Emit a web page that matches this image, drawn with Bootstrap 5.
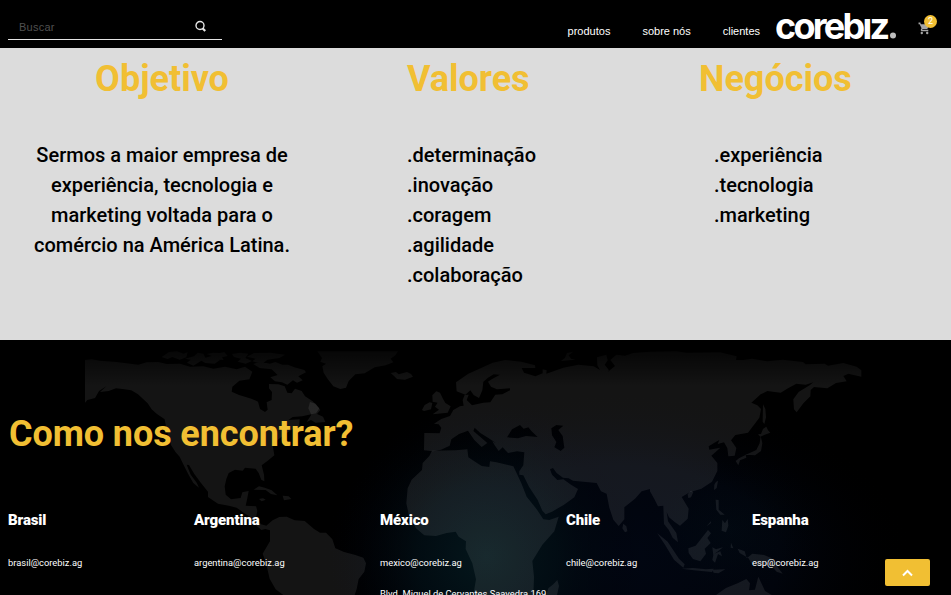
<!DOCTYPE html>
<html lang="pt-BR">
<head>
<meta charset="utf-8">
<meta name="viewport" content="width=device-width, initial-scale=1">
<title>Corebiz</title>
<link href="https://cdn.jsdelivr.net/npm/bootstrap@5.3.0/dist/css/bootstrap.min.css" rel="stylesheet">
<style>
html, body { height: 100%; overflow: hidden; }
body { font-family: Roboto, "Liberation Sans", sans-serif; background: #000; color: #000; }
.topbar { height: 48px; background: #000; padding-left: 8px; }
.search-box { width: 214px; height: 26px; margin-top: 14px; border-bottom: 1px solid #e4e4e4; }
.search-box input { font: 11px/14px "Liberation Sans", Arial, sans-serif; letter-spacing: .25px; width: 175px; padding: 0 0 0 11px; color: #fff; outline: 0; }
.search-box input::placeholder { color: #505050; opacity: 1; }
.search-box svg { margin-left: 11px; margin-top: -1px; }
.menu { font: 11px/14px "Liberation Sans", Arial, sans-serif; gap: 32px; margin-top: 24px; }
.menu a { color: #fff; text-decoration: none; }
.brand-logo { margin: 0 0 0 16px; }
.brand-logo text { font-family: Inter, sans-serif; font-weight: 700; fill: #fff; }
.cart { width: 20px; height: 22px; margin: 14px 13px 0 21px; }
.cart-count { width: 13px; height: 13px; left: 6px; top: 1px; background: #f1bf33; color: #fff; font: 9px/13px Roboto, sans-serif; }
.values { height: 292px; background: #dcdcdc; grid-template-columns: 324px 375px 1fr; padding-top: 9px; }
.section-title { font-size: 36px; line-height: 44px; font-weight: 700; color: #f1bf33; margin: 0; }
.values .copy { font-size: 20px; line-height: 30px; font-weight: 500; margin-top: 39px; }
.values .mid { padding-left: 83px; }
.values .end .copy { padding-left: 15px; }
.offices { height: 255px; padding: 72px 0 0 8px; color: #fff; background: #000; }
.offices .section-title { letter-spacing: -.1px; padding-left: 1px; }
.office-grid { display: grid; grid-template-columns: repeat(5, 186px); margin-top: 54px; }
.office-grid h3 { font-size: 15px; line-height: 20px; font-weight: 900; letter-spacing: -.12px; margin: 0 0 25px; }
.office-grid p { font-size: 9.35px; line-height: 16px; margin: 0 0 15px; white-space: nowrap; }
.to-top { right: 21px; top: 219px; width: 45px; height: 27px; background: #f1bf33; border-radius: 2px; }
</style>
</head>
<body>
<header class="topbar d-flex align-items-start">
  <form class="search-box d-flex align-items-center">
    <input class="border-0 bg-transparent" type="text" placeholder="Buscar" aria-label="Buscar">
    <svg width="13" height="13" viewBox="0 0 13 13" fill="none" stroke="#e6e6e6"><circle cx="6" cy="5.5" r="4" stroke-width="1.4"/><path d="M8.500 8.300l2.700 2.700" stroke-width="2.200"/></svg>
  </form>
  <nav class="menu d-flex ms-auto"><a href="#">produtos</a><a href="#">sobre nós</a><a href="#">clientes</a></nav>
  <svg class="brand-logo" width="121" height="48" viewBox="0 0 121 48"><text x="-1" y="38.500" font-size="36" textLength="115" lengthAdjust="spacing">corebız</text><circle cx="117" cy="35.500" r="3" fill="#bdbdbd"/></svg>
  <div class="cart position-relative">
    <svg width="13" height="13" viewBox="0 0 24 24" fill="#a5a5a5" class="d-block mt-2"><path d="M7 18a2.200 2.200 0 1 0 0 4.400 2.200 2.200 0 0 0 0-4.400zM1 1v3h2l3.600 7.600-1.400 2.400C4.500 15.400 5.500 17 7 17h12v-2.500H7.400l1.100-1.500h7.400c.8 0 1.400-.4 1.800-1L21 4H5.200l-.9-3zm16 17a2.200 2.200 0 1 0 0 4.400 2.200 2.200 0 0 0 0-4.400z"/></svg>
    <span class="cart-count position-absolute rounded-circle text-center">2</span>
  </div>
</header>

<section class="values d-grid">
  <div class="text-center"><h2 class="section-title">Objetivo</h2>
    <div class="copy">Sermos a maior empresa de<br>experiência, tecnologia e<br>marketing voltada para o<br>comércio na América Latina.</div></div>
  <div class="mid"><h2 class="section-title">Valores</h2>
    <div class="copy">.determinação<br>.inovação<br>.coragem<br>.agilidade<br>.colaboração</div></div>
  <div class="end"><h2 class="section-title">Negócios</h2>
    <div class="copy">.experiência<br>.tecnologia<br>.marketing</div></div>
</section>

<section class="offices position-relative overflow-hidden">
  <svg class="position-absolute top-0 start-0" width="951" height="255" viewBox="0 0 2853 765">
    <defs>
      <radialGradient id="teal"><stop offset="0" stop-color="#04171c"/><stop offset=".45" stop-color="#020e14" stop-opacity=".8"/><stop offset="1" stop-color="#000008" stop-opacity="0"/></radialGradient>
      <radialGradient id="navy"><stop offset="0" stop-color="#010612"/><stop offset=".55" stop-color="#01040c"/><stop offset="1" stop-color="#000" stop-opacity="0"/></radialGradient>
      <linearGradient id="land" gradientUnits="userSpaceOnUse" x1="0" y1="30" x2="0" y2="140"><stop offset="0" stop-color="#fff" stop-opacity=".025"/><stop offset="1" stop-color="#fff" stop-opacity=".08"/></linearGradient>
    </defs>
    <ellipse cx="1850" cy="650" rx="900" ry="500" fill="url(#navy)"/>
    <circle cx="1460" cy="650" r="470" fill="url(#teal)"/>
    <ellipse cx="2190" cy="570" rx="300" ry="240" fill="url(#teal)" opacity=".2"/>
    <g fill="url(#land)">
      <!-- North, Central and South America -->
      <path d="M255 60L275 58 300 62 350 66 415 74 440 67 475 66 500 72 540 71 570 80 610 79 640 86 675 80 710 88 735 80 757 95 748 118 718 122 697 140 695 155 717 165 754 176 774 185 780 207 795 216 803 209 800 187 815 180 816 156 807 145 807 132 835 133 854 139 862 158 875 160 885 146 905 153 915 169 938 184 958 205 948 220 906 229 878 231 865 240 899 238 897 262 878 267 851 285 830 302 818 316 823 346 803 362 785 376 792 404 793 424 784 419 776 399 767 386 735 383 728 392 705 389 686 399 679 417 674 439 677 464 693 478 722 474 727 457 746 453 742 474 737 497 768 499 772 512 768 533 783 553 799 557 818 541 838 531 860 530 884 541 914 543 942 567 960 578 978 578 997 598 1006 625 1032 636 1066 645 1090 653 1098 670 1093 695 1076 717 1070 747 1064 765 850 765 827 748 809 716 798 668 788 641 810 604 810 571 796 567 784 570 768 556 758 535 733 520 710 503 687 497 654 491 624 471 624 455 603 429 583 402 567 375 560 374 572 404 590 428 597 443 580 429 565 403 551 375 539 350 527 337 513 315 500 270 494 238 470 221 455 208 443 190 414 163 394 151 368 147 348 145 326 153 300 156 320 138 297 153 285 174 262 180 255 188Z"/>
      <!-- Arctic islands and Greenland -->
      <path d="M485 51l22-15 24-2 20 7 12-5-4 16-20 7-22-8-14 6-18-6zM555 56l27-7 11-11 17 3 6 12 27-7 16 15-15 10-28-2-12-7-24 15-19-9 11-9zM620 42l20-4 19 1 14-3 10 12-17 4 5 8-24-3-21-2 10-7zM696 42l24-4 25 3-9 13 20 9-19 8-24-6 10-9-21-5zM741 50l21-11 50-1 43 6-17 10-36 5-15 13-30-8 10-8zM760 72l22-8 27 7 17-5 21 8 17 0 19 8 30 8 5 7-23 12 13 12-17 7-12-7-17 13-16-7-21-3-14-12 22-7-18-17-36-4z"/>
      <path d="M952 34l242 0-8 12-14 10 8 11-23 9-33 6-30 18-28 3-20 20-8 20-17 4-21-8-17-22-12-19-4-19 11-8-17-6 5-11z"/>
      <path d="M1172 99l16-3 8 7 25-7 12 6 6 8-24 9-24-2-8-8zM930 186l17 5 14 19-10 12 18 8 7 16-29 2-14-8-13 6 14-22-9-19zM761 449l16-10 17 4 21 8 17 15-19-4-16-12zM777 477l12-2 8 4-12 5zM848 467l18 2 8 8-22 4z"/>
      <!-- Eurasia -->
      <path fill-rule="evenodd" d="M1272 331L1273 279 1319 280 1324 263 1316 253 1302 251 1324 237 1350 228 1360 210 1380 199 1391 197 1388 180 1394 165 1406 164 1400 180 1416 196 1450 188 1471 187 1486 164 1507 163 1530 151 1530 145 1491 148 1473 140 1464 125 1475 118 1500 104 1481 103 1464 113 1450 125 1447 151 1437 174 1421 165 1411 151 1396 164 1370 154 1368 127 1405 101 1450 81 1478 68 1515 60 1564 65 1605 76 1606 84 1565 84 1572 98 1606 109 1628 100 1628 88 1640 91 1639 101 1690 83 1735 74 1781 79 1800 90 1792 76 1791 52 1819 44 1823 61 1814 74 1827 91 1822 97 1845 78 1831 60 1849 44 1875 47 1899 39 1950 35 2030 34 2060 38 2160 37 2210 49 2208 60 2230 60 2256 56 2302 64 2348 59 2409 66 2417 73 2474 71 2484 77 2530 69 2570 80 2584 91 2584 110 2545 101 2530 108 2540 124 2508 129 2482 145 2442 141 2432 150 2431 169 2410 190 2390 217 2382 208 2380 178 2396 156 2430 135 2440 127 2417 134 2389 131 2364 145 2342 158 2302 153 2282 163 2254 188 2272 196 2283 207 2278 233 2244 278 2206 285 2193 301 2209 324 2204 347 2185 349 2182 324 2172 307 2153 312 2158 300 2147 306 2126 319 2128 329 2161 323 2134 347 2152 369 2152 393 2136 425 2104 446 2069 457 2045 471 2066 506 2063 536 2040 557 2024 546 2007 532 2000 516 2004 544 2029 579 2034 607 2018 593 2006 569 1992 552 1990 497 1974 499 1963 477 1950 454 1950 447 1925 454 1905 476 1873 502 1873 538 1856 558 1840 539 1828 503 1820 461 1803 454 1790 429 1719 422 1706 415 1689 413 1670 399 1659 384 1650 388 1656 404 1672 420 1690 418 1713 434 1734 447 1723 472 1692 494 1656 515 1637 523 1627 512 1613 480 1587 440 1570 406 1558 404 1558 394 1570 376 1573 337 1551 334 1524 339 1508 322 1496 333 1484 316 1477 304 1489 310 1464 293 1441 279 1424 263 1420 273 1442 292 1462 309 1445 321 1423 300 1404 272 1377 282 1354 298 1349 317 1323 329 1299 334ZM1521 292L1554 295 1578 288 1613 291 1595 274 1585 262 1571 266 1560 255 1536 268ZM1654 265L1669 255 1690 257 1675 270 1688 288 1693 323 1682 333 1663 322 1669 306 1656 286Z"/>
      <path d="M1266 210l8-15 15-8 8 2-4 19-21 5zM1297 166l12-12 11 4 8 17 8 14 16 10-9 19-45 5 19-14-12-9 8-12-15-3zM1683 63l12-10 6-14 19-4-14 11 7 10 13 3-19 2zM2289 193l7 14 2 25-5 20-5-7zM2289 267l10-7 5 11 7 7-17 6-13 6-7-7 9-1zM2282 289l5 21-4 23-18 13-28-2 2 9-19 8-5 15-8-13 10-8 24-12 28-13 10-20zM2148 426l6-4-4 22-8 6 1-16zM2063 463l10-11 7 4-7 16-8 2zM1870 551l9 8 3 15-7 3-8-12z"/>
      <!-- Africa -->
      <path d="M1296 332L1368 331 1402 328 1405 352 1432 370 1445 378 1468 381 1470 364 1489 367 1540 379 1550 400 1564 430 1580 470 1610 508 1630 538 1648 540 1676 530 1663 574 1627 614 1597 663 1602 710 1600 765 1420 765 1428 718 1417 670 1397 627 1398 604 1376 590 1367 575 1340 579 1308 588 1273 586 1248 565 1227 527 1219 490 1223 445 1235 419 1266 390 1268 369 1288 348Z"/>
      <path d="M1672 720l5 18-6 27-32 0 6-20 15-12z"/>
      <!-- South-east Asia and Oceania -->
      <path d="M1972 580l31 25 34 51 17 17-4 10-28-24-27-45zM2065 625l22-8 20-25 17-22 9 10-11 14 10 15-18 17 4 15-17 23-22-7-13-18zM2045 686l34-2 39 4 23-2-5 10-54-5zM2137 689l39-1-21 12-14-2zM2137 622l11 6 21-6-17 13-9 6 18-7 5 15-12-7-9 26-8-8 3-14zM2147 479l9 1 0 29 18 15-13 0-12-15zM2167 540l8 10 8-13 2 20-7 20-13-5zM2133 544l-13 15 13-10zM2193 608l7 17-8-2zM2213 626l21 8 6 21 17-14 35 4 22 9 12 18 22 29-18-6-20-22-32 5-24-8-9-16-26-15zM2148 765l30-21 35-14 26-13 11 13-3 21 18-2 10-39 20 43 20 12z"/>
    </g>
  </svg>
  <div class="position-relative">
    <h2 class="section-title">Como nos encontrar?</h2>
    <div class="office-grid">
      <div><h3>Brasil</h3><p>brasil@corebiz.ag</p></div>
      <div><h3>Argentina</h3><p>argentina@corebiz.ag</p></div>
      <div><h3>México</h3><p>mexico@corebiz.ag</p><p>Blvd. Miguel de Cervantes Saavedra 169</p></div>
      <div><h3>Chile</h3><p>chile@corebiz.ag</p></div>
      <div><h3>Espanha</h3><p>esp@corebiz.ag</p></div>
    </div>
  </div>
  <a href="#" class="to-top position-absolute d-flex align-items-center justify-content-center" aria-label="Voltar ao topo"><svg width="12" height="8" viewBox="0 0 12 8" fill="none" stroke="#fff" stroke-width="2"><path d="M1 6.500L5.500 2 10 6.500"/></svg></a>
</section>
<script src="https://cdn.jsdelivr.net/npm/bootstrap@5.3.0/dist/js/bootstrap.bundle.min.js"></script>
</body>
</html>
